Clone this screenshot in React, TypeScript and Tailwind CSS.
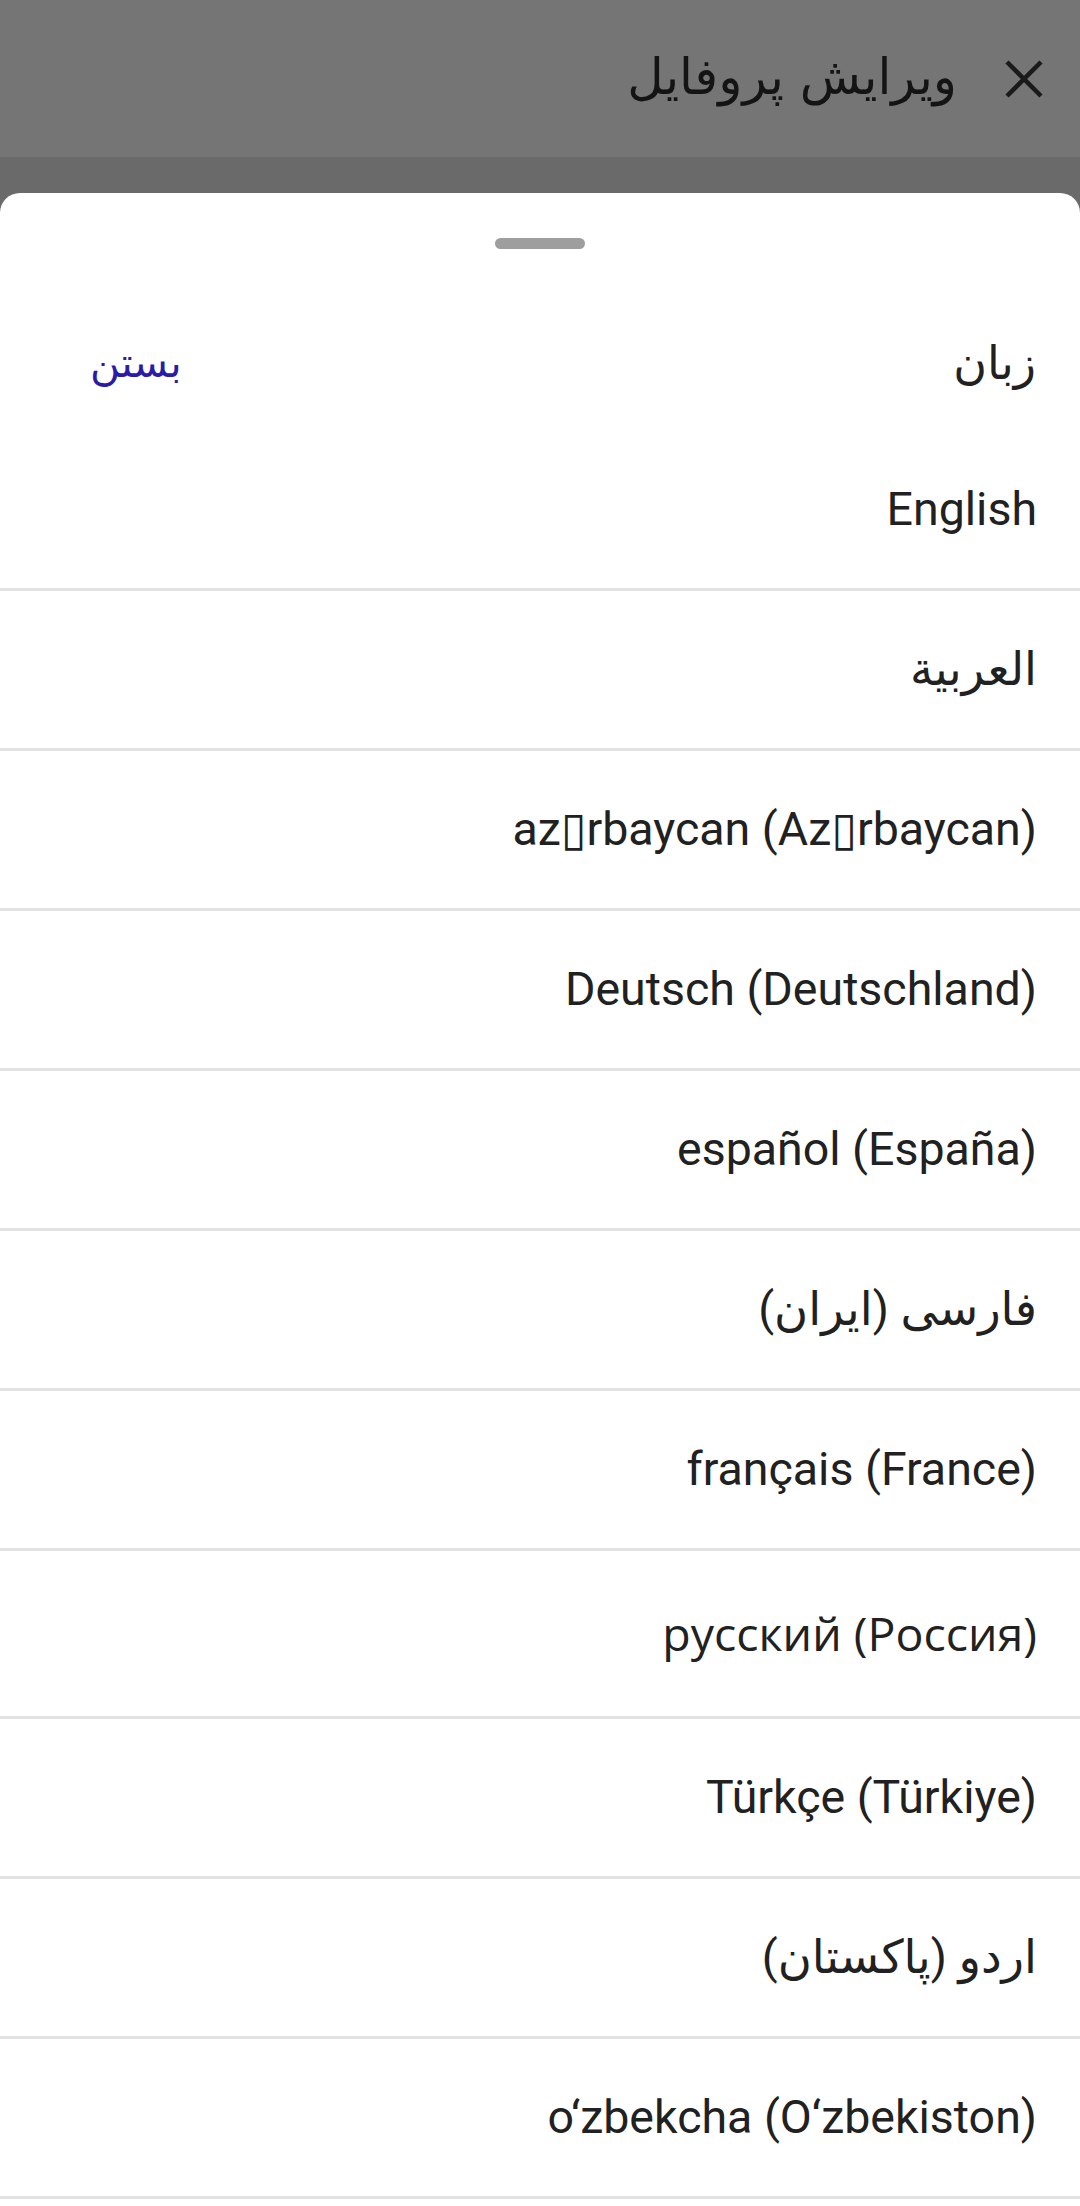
import React from 'react';

const languages: { label: string; tall?: boolean }[] = [
  { label: 'English' },
  { label: 'العربية' },
  { label: 'az▯rbaycan (Az▯rbaycan)' },
  { label: 'Deutsch (Deutschland)' },
  { label: 'español (España)' },
  { label: 'فارسی (ایران)' },
  { label: 'français (France)' },
  { label: 'русский (Россия)', tall: true },
  { label: 'Türkçe (Türkiye)' },
  { label: 'اردو (پاکستان)' },
  { label: 'o‘zbekcha (O‘zbekiston)' },
];

const App: React.FC = () => {
  return (
    <div
      dir="rtl"
      className="w-[1080px] h-[2206px] overflow-hidden flex flex-col bg-[#6a6a6a] font-['Roboto','DejaVu_Sans',sans-serif]"
    >
      {/* dimmed app bar */}
      <div className="h-[157px] shrink-0 bg-[#757575] flex items-center pr-[37px] gap-[48px]">
        <svg width="38" height="38" viewBox="0 0 38 38" className="shrink-0">
          <path d="M2 2 L36 36 M36 2 L2 36" stroke="#1a1a1a" strokeWidth="4.5" fill="none" />
        </svg>
        <span className="text-[50px] leading-none text-[#141414] font-['DejaVu_Sans',sans-serif] pb-[4px]">
          ویرایش پروفایل
        </span>
      </div>
      <div className="h-[36px] shrink-0 bg-[#6a6a6a]" />

      {/* bottom sheet */}
      <div className="flex-1 bg-white rounded-t-[20px] flex flex-col pt-[45px]">
        <div className="self-center w-[90px] h-[11px] rounded-full bg-[#9e9e9e]" />

        <div className="mt-[46px] h-[136px] flex items-center justify-between pr-[44px] pl-[90px]">
          <span className="text-[46px] leading-none text-[#212121] font-['DejaVu_Sans',sans-serif]">زبان</span>
          <button className="text-[41px] leading-none text-[#2a1ca8] font-['DejaVu_Sans',sans-serif]">بستن</button>
        </div>

        <ul>
          {languages.map((lang) => (
            <li
              key={lang.label}
              className={`${lang.tall ? 'h-[168px]' : 'h-[160px]'} flex items-center pr-[43px] border-b-[3px] border-[#e3e3e3] text-[46.5px] leading-none text-[#212121] ${
                lang.tall ? "font-['Open_Sans',sans-serif]" : ''
              }`}
            >
              <span dir="auto">{lang.label}</span>
            </li>
          ))}
        </ul>
      </div>
    </div>
  );
};

export default App;
